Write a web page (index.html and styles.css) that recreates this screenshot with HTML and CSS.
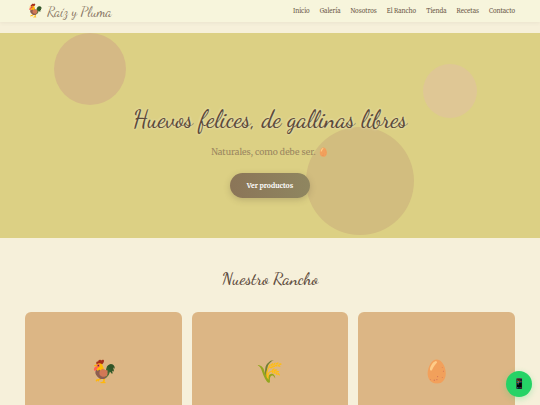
FILE: index.html
```html
<!DOCTYPE html>
<html lang="es">
<head>
    <meta charset="utf-8">
    <title>Raíz y Pluma</title>
    <link rel="stylesheet" href="styles.css">
</head>
<body>
    <header class="site-header">
        <a class="logo" href="#"><span class="logo-icon">🐓</span>Raíz y Pluma</a>
        <nav class="nav">
            <a href="#">Inicio</a>
            <a href="#">Galería</a>
            <a href="#">Nosotros</a>
            <a href="#">El Rancho</a>
            <a href="#">Tienda</a>
            <a href="#">Recetas</a>
            <a href="#">Contacto</a>
        </nav>
    </header>

    <section class="hero">
        <span class="circle circle-one"></span>
        <span class="circle circle-two"></span>
        <span class="circle circle-three"></span>
        <div class="hero-content">
            <h1>Huevos felices, de gallinas libres</h1>
            <p>Naturales, como debe ser. 🥚</p>
            <a class="btn" href="#">Ver productos</a>
        </div>
    </section>

    <section class="ranch">
        <h2>Nuestro Rancho</h2>
        <div class="cards">
            <div class="card"><span>🐓</span></div>
            <div class="card"><span>🌾</span></div>
            <div class="card"><span>🥚</span></div>
        </div>
    </section>

    <a class="float-phone" href="#">📱</a>
</body>
</html>
```

FILE: styles.css
```css
body { margin: 0; background: #f6f0da; color: #5c4a3a; font-family: "Merriweather", "Liberation Serif", serif; height: 405px; overflow: hidden; }
a { text-decoration: none; color: inherit; }

/* Header */
.site-header { display: flex; justify-content: space-between; align-items: center; height: 22px; padding: 0 25px 0 27px; background: #f7f5dc; box-shadow: 0 1px 4px rgba(92,74,58,0.08); }
.logo { display: flex; align-items: center; gap: 4px; font-family: "Dancing Script", cursive; font-size: 13.7px; color: #85725f; white-space: nowrap; }
.logo-icon { font-size: 13px; }
.nav { display: flex; gap: 10px; font-size: 6.1px; color: #6f5d4c; }

/* Hero */
.hero { position: relative; margin-top: 11px; height: 205px; background: #dcd084; overflow: hidden; display: flex; justify-content: center; }
.circle { position: absolute; border-radius: 50%; }
.circle-one { left: 54px; top: 0; width: 72px; height: 72px; background: #d5b985; }
.circle-two { left: 423px; top: 31px; width: 54px; height: 54px; background: #dfc795; }
.circle-three { left: 306px; top: 94px; width: 108px; height: 108px; background: #d2bd7f; }
.hero-content { position: relative; text-align: center; padding-top: 71px; }
.hero h1 { margin: 0; font-family: "Dancing Script", cursive; font-weight: 500; font-size: 24px; line-height: 32px; color: #5c4a3a; text-shadow: 0 0 3px rgba(255,255,255,0.6); }
.hero p { margin: 9px 0 13px; font-size: 8.6px; line-height: 14px; color: #9a8660; }
.btn { display: inline-block; width: 80px; height: 25px; line-height: 25px; border-radius: 13px; background: linear-gradient(90deg, #8b7558, #8f8660); color: #fff; font-size: 6.8px; font-weight: bold; box-shadow: 0 2px 6px rgba(92,74,58,0.25); }

/* Rancho */
.ranch { padding: 30px 25px 0; }
.ranch h2 { margin: 0 0 23px; text-align: center; font-family: "Dancing Script", cursive; font-weight: 500; font-size: 17px; color: #5c4a3a; }
.cards { display: grid; grid-template-columns: repeat(3, 1fr); gap: 10px; }
.card { height: 160px; padding-top: 45px; box-sizing: border-box; background: #dcb685; border-radius: 6px; text-align: center; font-size: 22px; }

/* Boton flotante */
.float-phone { position: fixed; right: 8px; bottom: 8px; width: 26px; height: 26px; line-height: 26px; border-radius: 50%; background: #25d366; text-align: center; font-size: 10px; box-shadow: 0 2px 6px rgba(37,211,102,0.3); }
```
